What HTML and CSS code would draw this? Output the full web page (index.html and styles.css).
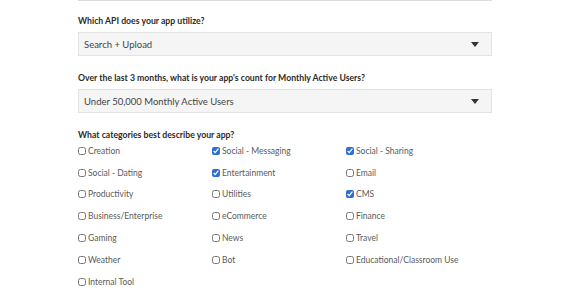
FILE: index.html
```html
<!DOCTYPE html>
<html lang="en">
<head>
  <meta charset="UTF-8">
  <title>App details</title>
  <link rel="stylesheet" href="styles.css">
</head>
<body>
  <div class="form-container">
    <div class="prev-field"></div>

    <div class="form-group">
      <label class="field-label" for="api">Which API does your app utilize?</label>
      <div class="select-box" id="api">
        <span>Search + Upload</span>
        <span class="arrow"></span>
      </div>
    </div>

    <div class="form-group">
      <label class="field-label" for="mau">Over the last 3 months, what is your app's count for Monthly Active Users?</label>
      <div class="select-box" id="mau">
        <span>Under 50,000 Monthly Active Users</span>
        <span class="arrow"></span>
      </div>
    </div>

    <div class="form-group">
      <div class="field-label">What categories best describe your app?</div>
      <div class="category-grid">
        <label class="check"><input type="checkbox">Creation</label>
        <label class="check"><input type="checkbox" checked>Social - Messaging</label>
        <label class="check"><input type="checkbox" checked>Social - Sharing</label>
        <label class="check"><input type="checkbox">Social - Dating</label>
        <label class="check"><input type="checkbox" checked>Entertainment</label>
        <label class="check"><input type="checkbox">Email</label>
        <label class="check"><input type="checkbox">Productivity</label>
        <label class="check"><input type="checkbox">Utilities</label>
        <label class="check"><input type="checkbox" checked>CMS</label>
        <label class="check"><input type="checkbox">Business/Enterprise</label>
        <label class="check"><input type="checkbox">eCommerce</label>
        <label class="check"><input type="checkbox">Finance</label>
        <label class="check"><input type="checkbox">Gaming</label>
        <label class="check"><input type="checkbox">News</label>
        <label class="check"><input type="checkbox">Travel</label>
        <label class="check"><input type="checkbox">Weather</label>
        <label class="check"><input type="checkbox">Bot</label>
        <label class="check"><input type="checkbox">Educational/Classroom Use</label>
        <label class="check"><input type="checkbox">Internal Tool</label>
      </div>
    </div>
  </div>
</body>
</html>
```

FILE: styles.css
```css
body {
  font-family: Lato, "Liberation Sans", Arial, sans-serif;
  margin: 0;
  padding: 0;
  background-color: #fff;
  color: #333;
}

.form-container {
  width: 414px;
  margin-left: 78px;
}

.prev-field {
  height: 0;
  border-bottom: 1px solid #dcdcdc;
  margin-bottom: 14px;
}

.form-group {
  margin-bottom: 16px;
}

.field-label {
  display: block;
  font-size: 8.7px;
  font-weight: bold;
  line-height: 12px;
  color: #2b2b2b;
  margin-bottom: 5px;
}

.select-box {
  display: flex;
  justify-content: space-between;
  align-items: center;
  box-sizing: border-box;
  height: 24px;
  padding: 0 12px 0 5px;
  background-color: #f5f5f5;
  border: 1px solid #e2e2e2;
  font-size: 9.5px;
  color: #444;
}

.arrow {
  width: 0;
  height: 0;
  border-left: 4px solid transparent;
  border-right: 4px solid transparent;
  border-top: 5px solid #333;
}

.category-grid {
  display: grid;
  grid-template-columns: 134px 134px 1fr;
  grid-auto-rows: 21.8px;
  margin-top: -6px;
}

.check {
  display: flex;
  align-items: center;
  font-size: 8.5px;
  color: #5a5a5a;
}

.check input {
  width: 8px;
  height: 8px;
  margin: 0 2px 0 0;
  accent-color: #2f6fd3;
}
```
